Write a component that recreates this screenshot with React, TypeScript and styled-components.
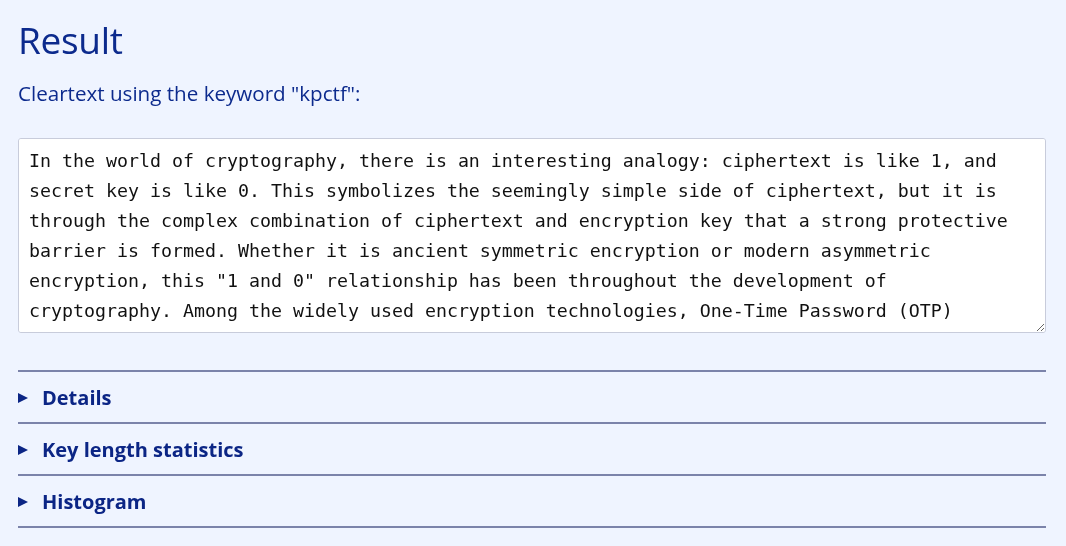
import React from "react";
import styled, { createGlobalStyle } from "styled-components";

const GlobalStyle = createGlobalStyle`
  html, body {
    margin: 0;
    padding: 0;
    background: #eff4ff;
  }
  body {
    font-family: "Open Sans", "Noto Sans", sans-serif;
    color: #0b2585;
  }
  * { box-sizing: border-box; }
`;

const Page = styled.main`
  padding: 14px 20px 0 18px;
  min-height: 546px;
  background: #eff4ff;
`;

const Title = styled.h1`
  margin: 0;
  font-size: 37px;
  font-weight: 400;
  line-height: 52px;
  color: #0c2a8d;
  letter-spacing: -0.3px;
`;

const Label = styled.p`
  margin: 12px 0 0 0;
  font-size: 20.6px;
  line-height: 30px;
  color: #0c2a8d;
`;

const Output = styled.textarea`
  display: block;
  width: 100%;
  height: 195px;
  margin-top: 30px;
  padding: 7px 10px 6px 10px;
  border: 1px solid #c8ccdb;
  border-radius: 3px;
  background: #ffffff;
  color: #111111;
  font-family: "DejaVu Sans Mono", "Liberation Mono", monospace;
  font-size: 18.27px;
  line-height: 30px;
  scrollbar-width: none;
  resize: both;
  outline: none;
`;

const Sections = styled.div`
  margin-top: 37px;
  border-top: 2px solid #7b83aa;
`;

const Section = styled.details`
  border-bottom: 2px solid #7b83aa;
`;

const Summary = styled.summary`
  list-style: none;
  display: flex;
  align-items: center;
  gap: 14px;
  height: 50px;
  font-size: 20px;
  font-weight: 700;
  color: #0b2585;
  cursor: pointer;
  &::-webkit-details-marker { display: none; }
  &::before {
    content: "";
    width: 0;
    height: 0;
    border-top: 5px solid transparent;
    border-bottom: 5px solid transparent;
    border-left: 10px solid #0b2585;
    margin-top: 2px;
  }
`;

const text =
  'In the world of cryptography, there is an interesting analogy: ciphertext is like 1, and secret key is like 0. This symbolizes the seemingly simple side of ciphertext, but it is through the complex combination of ciphertext and encryption key that a strong protective barrier is formed. Whether it is ancient symmetric encryption or modern asymmetric encryption, this "1 and 0" relationship has been throughout the development of cryptography. Among the widely used encryption technologies, One-Time Password (OTP) technology is famous for its simplicity and security.';

export default function App() {
  return (
    <>
      <GlobalStyle />
      <Page>
        <Title>Result</Title>
        <Label>Cleartext using the keyword "kpctf":</Label>
        <Output readOnly value={text} spellCheck={false} />
        <Sections>
          {["Details", "Key length statistics", "Histogram"].map((s) => (
            <Section key={s}>
              <Summary>{s}</Summary>
            </Section>
          ))}
        </Sections>
      </Page>
    </>
  );
}
